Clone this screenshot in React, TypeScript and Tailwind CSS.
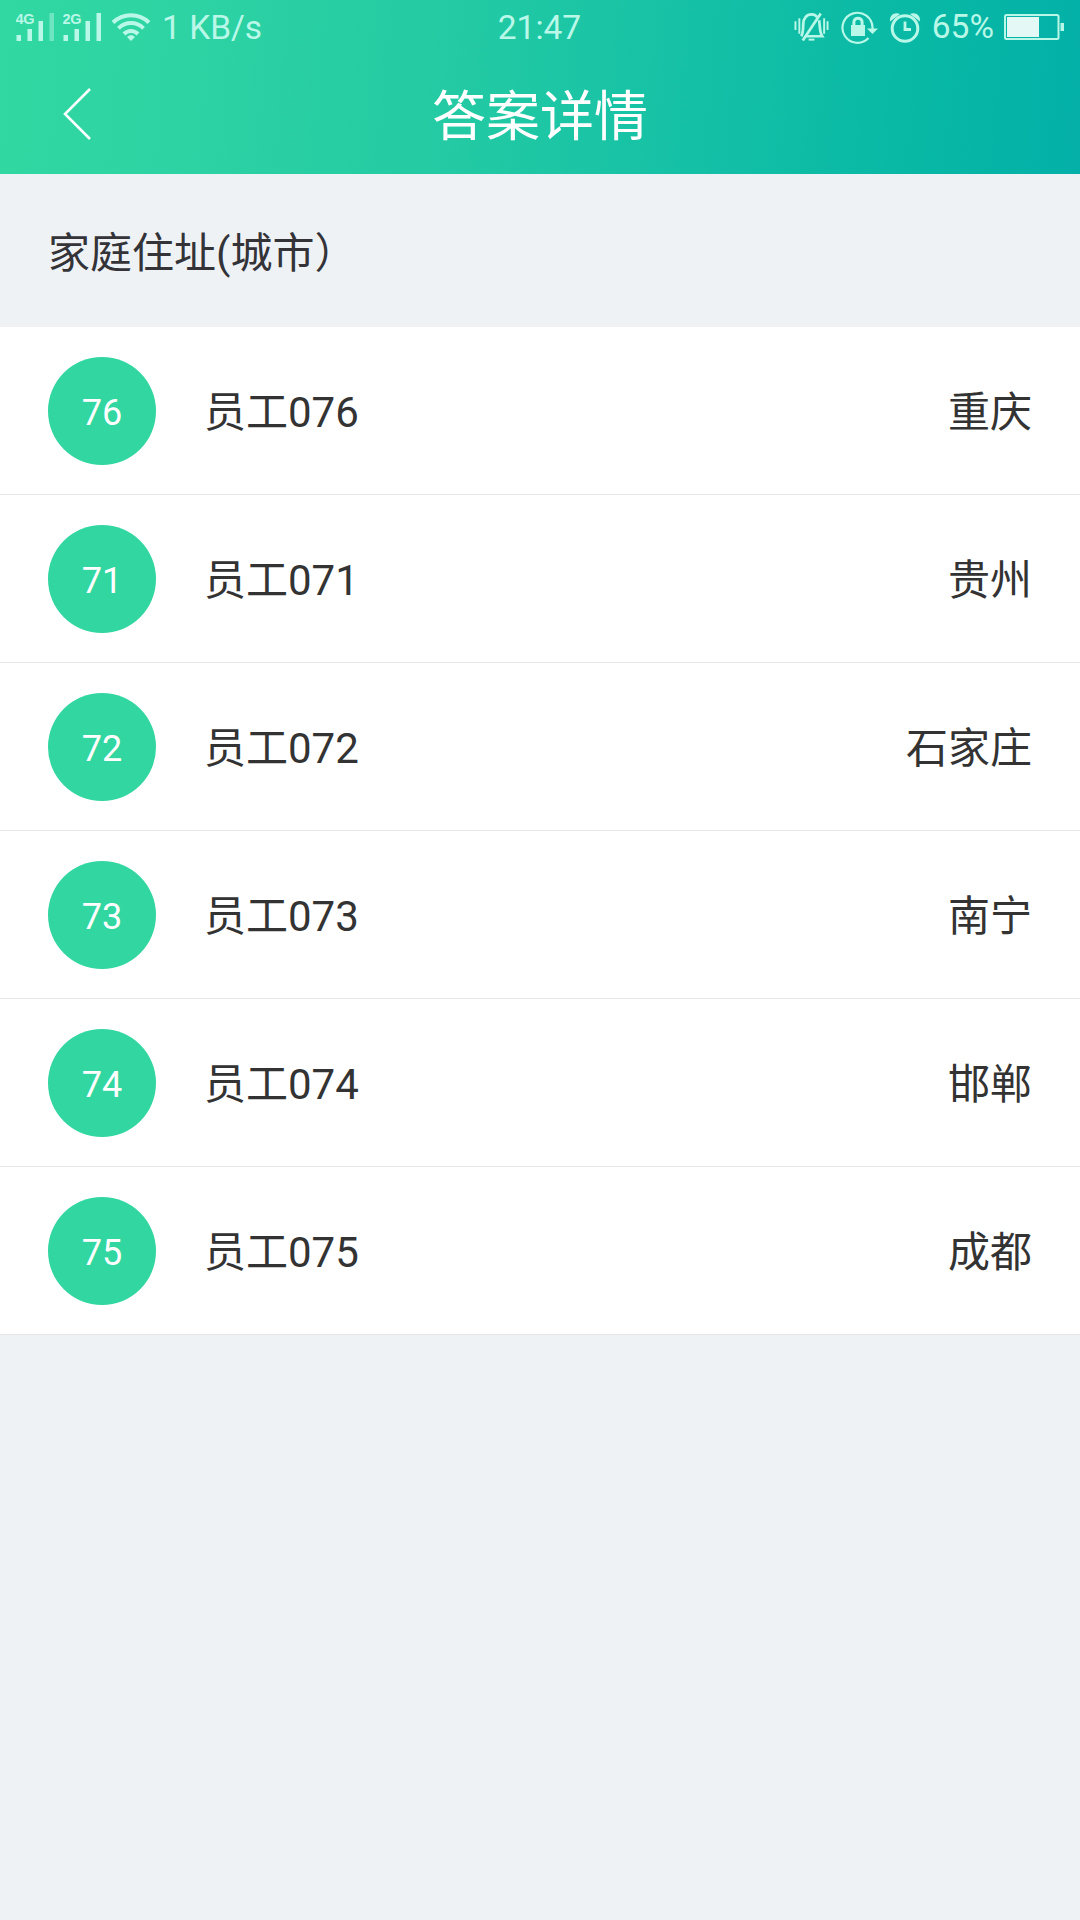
interface Answer {
  id: number;
  name: string;
  city: string;
}

interface SignalProps {
  network: string;
  weak?: boolean;
}

const answers: Answer[] = [
  { id: 76, name: '员工076', city: '重庆' },
  { id: 71, name: '员工071', city: '贵州' },
  { id: 72, name: '员工072', city: '石家庄' },
  { id: 73, name: '员工073', city: '南宁' },
  { id: 74, name: '员工074', city: '邯郸' },
  { id: 75, name: '员工075', city: '成都' },
];

function Signal({ network, weak }: SignalProps) {
  return (
    <svg className="w-[40px] h-[30px]" viewBox="0 0 40 30" fill="currentColor">
      <text x="-0.5" y="11.5" fontSize="14.5" fontWeight="700" fontFamily="Liberation Sans, sans-serif" textLength="19">
        {network}
      </text>
      <rect x="0.5" y="23" width="4.5" height="6" />
      <rect x="11.5" y="17" width="4.5" height="12" />
      <rect x="22.5" y="9" width="4.5" height="20" />
      <rect x="33.5" y="1" width="4.5" height="28" opacity={weak ? 0.45 : 1} />
    </svg>
  );
}

function WifiIcon() {
  return (
    <svg className="w-[40px] h-[30px]" viewBox="0 0 40 30" fill="none" stroke="currentColor" strokeWidth="4">
      <path d="M2 10.5 C12 0.8 28 0.8 38 10.5" />
      <path d="M7.5 16.3 C14.5 9.3 25.5 9.3 32.5 16.3" />
      <path d="M13 22 C17 17.9 23 17.9 27 22" />
      <path d="M16 25 C18.5 22.6 21.5 22.6 24 25 L20 29 Z" fill="currentColor" stroke="none" />
    </svg>
  );
}

function BellOffIcon() {
  return (
    <svg className="w-[35px] h-[32px]" viewBox="0 0 36 32" fill="none" stroke="currentColor" strokeWidth="2.8">
      <path d="M7.5 25.5 C9.5 22 9.5 20 9.5 13 C9.5 7 13 3 18 3 C20.5 3 22.5 4 24 6 M25.8 9 C26.8 14 26 21 29 25.5 H12" />
      <path d="M27.5 2 L9 30" />
      <path d="M15 29 H21" strokeWidth="2" />
      <path d="M5.5 7 V23 M1.5 10 V19 M31 7 V23 M34.5 10 V19" strokeWidth="2" />
    </svg>
  );
}

function RotationLockIcon() {
  return (
    <svg className="w-[38px] h-[34px]" viewBox="0 0 38 34" fill="none" stroke="currentColor" strokeWidth="2.2">
      <path d="M27.5 28 A15 15 0 1 1 31.5 17.5 V20" />
      <path d="M26 18.5 H37 L31.5 24 Z" fill="currentColor" stroke="none" />
      <rect x="10" y="15" width="14" height="11" fill="currentColor" stroke="none" />
      <path d="M12.9 16 V12.2 C12.9 6.8 21.1 6.8 21.1 12.2 V16" strokeWidth="3" />
    </svg>
  );
}

function AlarmIcon() {
  return (
    <svg className="w-[32px] h-[32px]" viewBox="0 0 32 32" fill="none" stroke="currentColor" strokeWidth="3">
      <circle cx="16" cy="17.5" r="12.8" />
      <path d="M16 10.5 V18.5 H22" strokeWidth="2.8" />
      <path d="M1 10.5 C0.4 4 5.5 0.8 11 3 Z M31 10.5 C31.6 4 26.5 0.8 21 3 Z" fill="currentColor" stroke="none" />
    </svg>
  );
}

function BatteryIcon() {
  return (
    <svg className="w-[60px] h-[28px]" viewBox="0 0 60 28">
      <rect x="1" y="2" width="53.5" height="24" rx="1.5" fill="none" stroke="currentColor" strokeWidth="2" />
      <rect x="3" y="4" width="32" height="20" fill="#e4f9f5" />
      <rect x="56.5" y="10" width="3.5" height="8" fill="currentColor" />
    </svg>
  );
}

function StatusBar() {
  return (
    <div className="grid grid-cols-3 items-center h-[54px] pl-[16px] pr-[16px] text-[33.5px] leading-none text-[#b9f8e8]">
      <div className="flex items-center">
        <Signal network="4G" weak />
        <div className="ml-[7px]">
          <Signal network="2G" />
        </div>
        <div className="ml-[8px]">
          <WifiIcon />
        </div>
        <span className="ml-[11px] pt-[2px] whitespace-nowrap">1 KB/s</span>
      </div>
      <div className="text-center pt-[2px] pr-px">21:47</div>
      <div className="flex items-center justify-end">
        <BellOffIcon />
        <div className="ml-[12px]">
          <RotationLockIcon />
        </div>
        <div className="ml-[10px]">
          <AlarmIcon />
        </div>
        <span className="ml-[11px] mr-[10px]">65%</span>
        <BatteryIcon />
      </div>
    </div>
  );
}

function AnswerRow({ answer }: { answer: Answer }) {
  return (
    <li className="flex items-center h-[168px] px-[48px] bg-white border-b border-[#e6e6e6] text-[42px] text-[#333333]">
      <div className="flex items-center justify-center w-[108px] h-[108px] rounded-full bg-[#31d6a0] text-white text-[36px] pt-[5px]">
        {answer.id}
      </div>
      <span className="ml-[48px] pt-[4px]">{answer.name}</span>
      <span className="ml-auto pt-[4px]">{answer.city}</span>
    </li>
  );
}

export default function App() {
  return (
    <div className="w-full min-h-screen bg-[#eff2f5] font-[Roboto,'Noto_Sans_CJK_SC',sans-serif]">
      <header className="h-[174px] bg-linear-[95deg,#32d8a1_0%,#2cd2a3_20%,#23caa3_42%,#14c0a6_65%,#08b8a5_85%,#04b0a8_100%]">
        <StatusBar />
        <div className="grid grid-cols-3 items-center h-[120px] px-[62px] text-white">
          <button className="w-[30px] h-[52px]" aria-label="返回">
            <svg viewBox="0 0 30 52" fill="none" stroke="currentColor" strokeWidth="2.6">
              <path d="M28 1 L3 26 L28 51" />
            </svg>
          </button>
          <h1 className="pt-[8px] text-[54px] leading-none text-center whitespace-nowrap">答案详情</h1>
        </div>
      </header>

      <h2 className="flex items-center h-[153px] px-[48px] pt-[8px] border-b-3 border-[#f1f1f2] text-[42px] text-[#333338]">
        家庭住址(城市）
      </h2>

      <ul>
        {answers.map((answer) => (
          <AnswerRow key={answer.id} answer={answer} />
        ))}
      </ul>
    </div>
  );
}
